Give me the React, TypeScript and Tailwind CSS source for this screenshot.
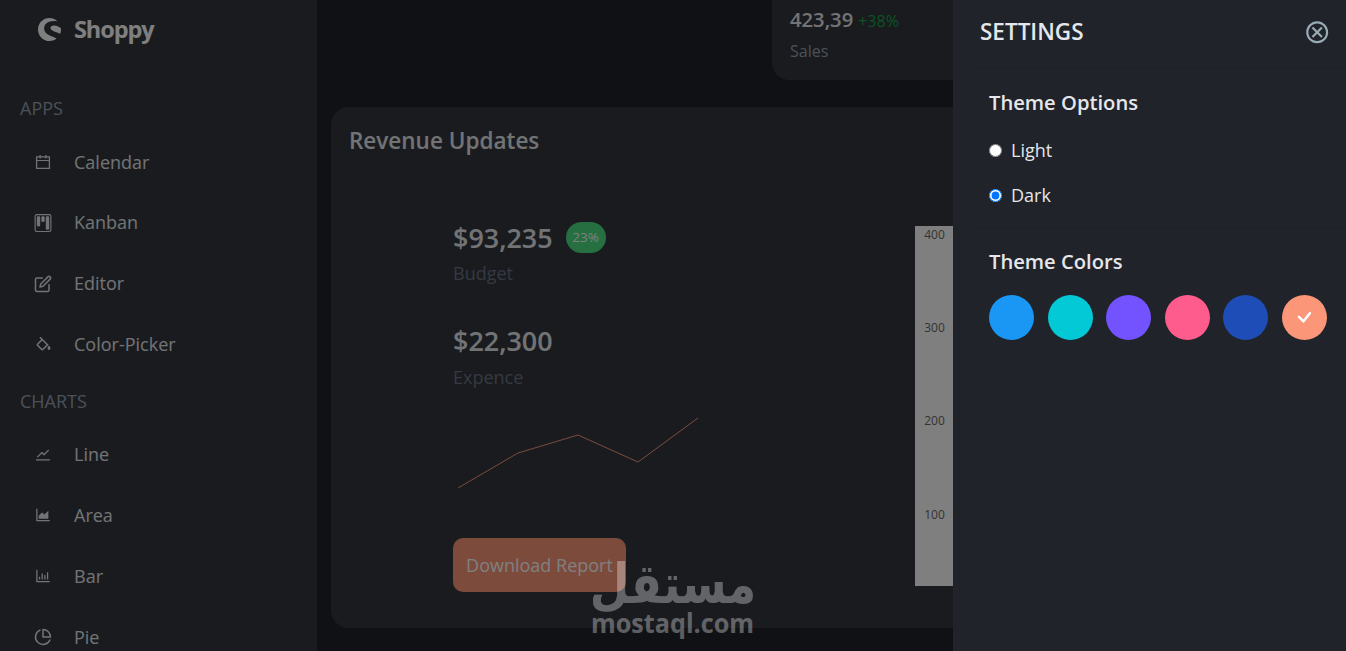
import React from 'react';
import { AiOutlineAreaChart, AiOutlineBarChart, AiOutlineCalendar, AiOutlineStock } from 'react-icons/ai';
import { BiColorFill } from 'react-icons/bi';
import { BsCheck, BsKanban } from 'react-icons/bs';
import { FiEdit, FiPieChart } from 'react-icons/fi';
import { MdOutlineCancel } from 'react-icons/md';
import { SiShopware } from 'react-icons/si';

const links = [
  {
    title: 'APPS',
    items: [
      { name: 'Calendar', icon: <AiOutlineCalendar /> },
      { name: 'Kanban', icon: <BsKanban /> },
      { name: 'Editor', icon: <FiEdit /> },
      { name: 'Color-Picker', icon: <BiColorFill /> },
    ],
  },
  {
    title: 'CHARTS',
    items: [
      { name: 'Line', icon: <AiOutlineStock /> },
      { name: 'Area', icon: <AiOutlineAreaChart /> },
      { name: 'Bar', icon: <AiOutlineBarChart /> },
      { name: 'Pie', icon: <FiPieChart /> },
    ],
  },
];

const themeColors = [
  { name: 'blue-theme', className: 'bg-[#1A97F5]' },
  { name: 'green-theme', className: 'bg-[#03C9D7]' },
  { name: 'purple-theme', className: 'bg-[#7352FF]' },
  { name: 'red-theme', className: 'bg-[#FF5C8E]' },
  { name: 'indigo-theme', className: 'bg-[#1E4DB7]' },
  { name: 'orange-theme', className: 'bg-[#FB9678]' },
];

const axisLabels = ['400', '300', '200', '100'];

const Sidebar: React.FC = () => (
  <aside className="w-[317px] shrink-0 h-full overflow-hidden bg-[#33373E]">
    <div className="flex items-center gap-[13px] h-[59px] mb-[23.3px] pl-[38px] text-white">
      <SiShopware className="size-[23px]" />
      <span className="text-[23.500px] font-bold tracking-[-1.1px]">Shoppy</span>
    </div>
    {links.map((group) => (
      <div key={group.title}>
        <p className="h-[49.4px] pl-5 pt-[13px] leading-[26px] text-gray-400">{group.title}</p>
        {group.items.map((item) => (
          <a key={item.name} href="#" className="flex items-center gap-[22px] h-[60.8px] pl-[34px] text-gray-200">
            {item.icon}
            <span>{item.name}</span>
          </a>
        ))}
      </div>
    ))}
  </aside>
);

const Dashboard: React.FC = () => (
  <main className="flex-1 min-w-0 flex flex-col pl-[14px]">
    {/* Sales card */}
    <div className="ml-[441px] h-20 rounded-bl-[18px] bg-[#33373E] pl-[18px] pt-1">
      <p className="leading-[30px]">
        <span className="text-[20.2px] font-semibold text-gray-200">423,39</span>
        <span className="ml-[5px] text-[16px] text-[#16a34a]">+38%</span>
      </p>
      <p className="mt-[3px] text-[16px] leading-[24px] text-gray-400">Sales</p>
    </div>

    {/* Revenue updates */}
    <div className="mt-[27px] h-[521px] rounded-l-[18px] bg-[#33373E] pl-[18px] pt-[18px]">
      <p className="text-[22.500px] leading-8 font-semibold text-gray-200">Revenue Updates</p>
      <div className="flex justify-between">
        <div className="pl-[104px] pt-[63px]">
          <div className="flex items-center gap-[13px] h-[34px]">
            <span className="pt-[3px] text-[26.9px] font-semibold text-gray-200">$93,235</span>
            <span className="flex items-center justify-center w-10 h-[31px] rounded-full bg-[#4ade80] pt-px text-[13.500px] text-white">23%</span>
          </div>
          <p className="mt-[6px] leading-[26px] text-gray-500">Budget</p>
          <p className="mt-[38px] h-[34px] leading-[34px] text-[26.9px] font-semibold text-gray-200">$22,300</p>
          <p className="mt-[6px] leading-[26px] text-gray-500">Expence</p>
          <svg width="250" height="88" viewBox="0 0 250 88" className="mt-[17px]" fill="none" stroke="#FB9678">
            <path d="M5 81L65 46L125 28L185 55L245 11" />
          </svg>
          <button className="mt-[43px] w-[173px] h-[54px] rounded-[10px] bg-[#FB9678] text-white">Download Report</button>
        </div>
        {/* Stacked chart, mostly under the settings panel */}
        <div className="w-[431px] h-[360px] mt-[69px] bg-white text-[12px] text-[#686868]">
          {axisLabels.map((label) => (
            <p key={label} className="h-[93.2px] w-[29.800px] text-right leading-[18px]">{label}</p>
          ))}
        </div>
      </div>
    </div>
  </main>
);

const ThemeSettings: React.FC = () => (
  <div className="absolute right-0 top-0 w-[393px] h-full bg-[#20232A] text-gray-200">
    <div className="flex items-center justify-between h-[64px] pl-[27px] pr-[15.500px]">
      <p className="text-[22.500px] leading-[32px] font-semibold">SETTINGS</p>
      <button className="text-[26.4px] text-[#99ABB4]">
        <MdOutlineCancel />
      </button>
    </div>
    <div className="ml-[18px] mt-[3px] border-t border-[#1d2026] pl-[18px] pt-[19px]">
      <p className="text-[20.2px] leading-[30px] font-semibold">Theme Options</p>
      <label className="flex items-center gap-[9px] mt-[20px] h-[26px]">
        <input type="radio" name="theme" className="size-[13px]" readOnly />
        <span>Light</span>
      </label>
      <label className="flex items-center gap-[9px] mt-[19px] h-[26px]">
        <input type="radio" name="theme" className="size-[13px]" defaultChecked />
        <span>Dark</span>
      </label>
    </div>
    <div className="ml-[18px] mt-[19px] border-t border-[#1d2026] pl-[18px] pt-[18px]">
      <p className="text-[20.2px] leading-[30px] font-semibold">Theme Colors</p>
      <div className="flex gap-[13.6px] mt-[19px]">
        {themeColors.map((color) => (
          <button
            key={color.name}
            className={`flex items-center justify-center size-[45px] shrink-0 rounded-full text-[26.4px] text-white ${color.className}`}
          >
            {color.name === 'orange-theme' && <BsCheck />}
          </button>
        ))}
      </div>
    </div>
  </div>
);

const Watermark: React.FC = () => (
  <svg className="absolute left-[582px] top-[550px] opacity-32" width="184" height="96" viewBox="0 0 184 96" fill="#fff">
    <g transform="translate(91 53) scale(0.91 1.1)">
      <text textAnchor="middle" direction="rtl" fontFamily="DejaVu Sans" fontWeight="bold" fontSize="50">
        مستقل
      </text>
    </g>
    <text x="9" y="82.5" textLength="163" lengthAdjust="spacingAndGlyphs" fontFamily="Open Sans" fontWeight="700" fontSize="26">
      mostaql.com
    </text>
  </svg>
);

const App: React.FC = () => {
  return (
    <div className="relative flex w-full h-screen overflow-hidden bg-[#20232A] font-['Open_Sans','Noto_Sans',sans-serif] text-[18px]">
      <Sidebar />
      <Dashboard />
      {/* Dimmed backdrop behind the settings panel */}
      <div className="absolute inset-0 bg-black/50" />
      <ThemeSettings />
      <Watermark />
    </div>
  );
};

export default App;
